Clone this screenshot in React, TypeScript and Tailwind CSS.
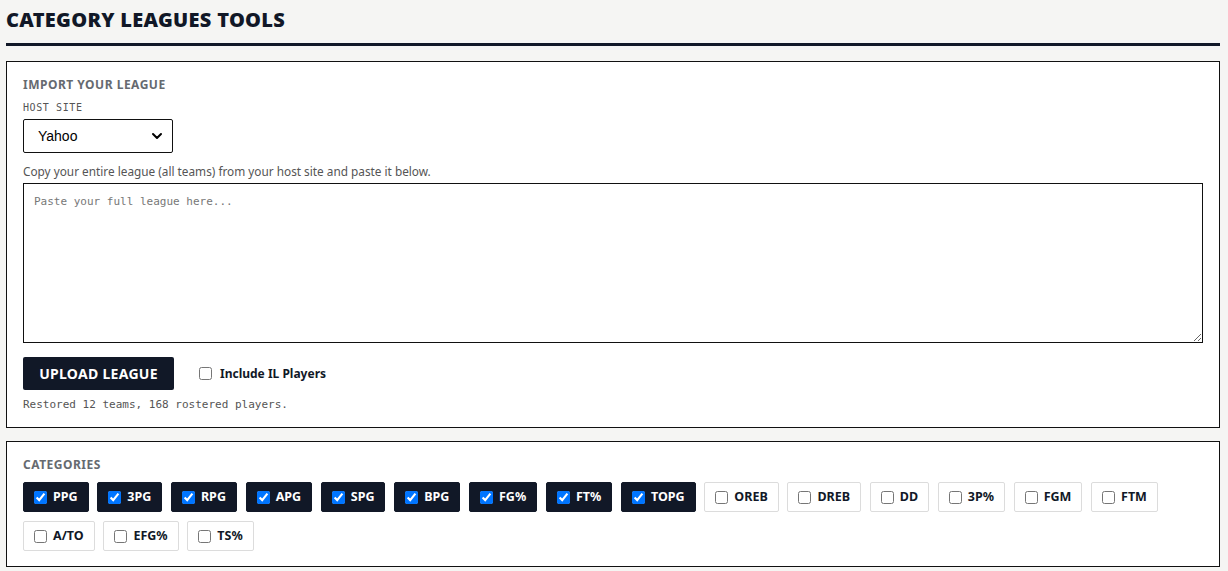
import { useState } from "react";
import { ChevronDown } from "lucide-react";

const SANS = "font-['Noto_Sans','Open_Sans',sans-serif]";
const MONO = "font-['DejaVu_Sans_Mono','Liberation_Mono',monospace]";

const CATEGORIES: { key: string; on: boolean }[] = [
  { key: "PPG", on: true },
  { key: "3PG", on: true },
  { key: "RPG", on: true },
  { key: "APG", on: true },
  { key: "SPG", on: true },
  { key: "BPG", on: true },
  { key: "FG%", on: true },
  { key: "FT%", on: true },
  { key: "TOPG", on: true },
  { key: "OREB", on: false },
  { key: "DREB", on: false },
  { key: "DD", on: false },
  { key: "3P%", on: false },
  { key: "FGM", on: false },
  { key: "FTM", on: false },
  { key: "A/TO", on: false },
  { key: "EFG%", on: false },
  { key: "TS%", on: false },
];

function CategoryChip({ label, checked, onToggle }: { label: string; checked: boolean; onToggle: () => void }) {
  return (
    <label
      className={
        checked
          ? "flex items-center gap-[6px] h-[30px] px-[10px] rounded-[2px] border border-[#111827] bg-[#111827] text-white cursor-pointer"
          : "flex items-center gap-[6px] h-[30px] px-[10px] rounded-[2px] border border-[#dcdcdc] bg-white text-[#111827] cursor-pointer"
      }
    >
      <input type="checkbox" checked={checked} onChange={onToggle} className="w-[13px] h-[13px]" />
      <span className="text-[12.5px] font-bold leading-none">{label}</span>
    </label>
  );
}

export default function App() {
  const [host, setHost] = useState("Yahoo");
  const [league, setLeague] = useState("");
  const [includeIL, setIncludeIL] = useState(false);
  const [cats, setCats] = useState(CATEGORIES);

  const toggle = (key: string) =>
    setCats((prev) => prev.map((c) => (c.key === key ? { ...c, on: !c.on } : c)));

  return (
    <div className={`min-h-screen bg-[#f5f5f3] pl-[6px] pr-[8px] ${SANS} text-[#111827]`}>
      <header className="pt-[6px] pb-[9px] border-b-[3px] border-[#111827]">
        <h1 className="text-[20px] font-black leading-[28px] tracking-[0.3px]">CATEGORY LEAGUES TOOLS</h1>
      </header>

      <section className="mt-[15px] bg-white border border-[#111] px-[16px] pt-[15px] pb-[15px]">
        <h2 className="text-[12px] font-bold text-[#666a70] tracking-[0.5px] leading-[16px]">IMPORT YOUR LEAGUE</h2>
        <div className={`mt-[8px] text-[10px] ${MONO} text-[#555] tracking-[0.6px] leading-[14px]`}>HOST SITE</div>
        <div className="relative mt-[4px] w-[150px]">
          <select
            value={host}
            onChange={(e) => setHost(e.target.value)}
            className="appearance-none w-[150px] h-[34px] pl-[14px] pr-[30px] border border-[#111] rounded-[2px] bg-white text-[14px] font-['Liberation_Sans',Arial,sans-serif] text-black"
          >
            <option>Yahoo</option>
            <option>ESPN</option>
            <option>Fantrax</option>
            <option>Sleeper</option>
          </select>
          <ChevronDown className="pointer-events-none absolute right-[8px] top-[9px] w-[16px] h-[16px] text-black" strokeWidth={3} />
        </div>

        <p className="mt-[10px] text-[11.8px] text-[#555] leading-[16px]">
          Copy your entire league (all teams) from your host site and paste it below.
        </p>
        <textarea
          value={league}
          onChange={(e) => setLeague(e.target.value)}
          placeholder="Paste your full league here..."
          className={`mt-[4px] block w-[1180px] h-[160px] border border-[#111] px-[10px] py-[10px] ${MONO} text-[11px] placeholder:text-[#777] outline-none`}
        />

        <div className="mt-[14px] flex items-center gap-[25px]">
          <button className="w-[151px] h-[33px] bg-[#111827] text-white text-[14px] font-bold tracking-[0.3px] rounded-[2px]">
            UPLOAD LEAGUE
          </button>
          <label className="flex items-center gap-[8px] cursor-pointer">
            <input
              type="checkbox"
              checked={includeIL}
              onChange={() => setIncludeIL(!includeIL)}
              className="w-[13px] h-[13px]"
            />
            <span className="text-[12px] font-bold">Include IL Players</span>
          </label>
        </div>
        <p className={`mt-[8px] text-[11px] ${MONO} text-[#555] leading-[14px]`}>
          Restored 12 teams, 168 rostered players.
        </p>
      </section>

      <section className="mt-[13px] bg-white border border-[#111] px-[16px] pt-[15px] pb-[15px]">
        <h2 className="text-[12px] font-bold text-[#666a70] tracking-[0.5px] leading-[16px]">CATEGORIES</h2>
        <div className="mt-[9px] flex flex-wrap gap-x-[8.7px] gap-y-[9px]">
          {cats.map((c) => (
            <CategoryChip key={c.key} label={c.key} checked={c.on} onToggle={() => toggle(c.key)} />
          ))}
        </div>
      </section>
    </div>
  );
}
